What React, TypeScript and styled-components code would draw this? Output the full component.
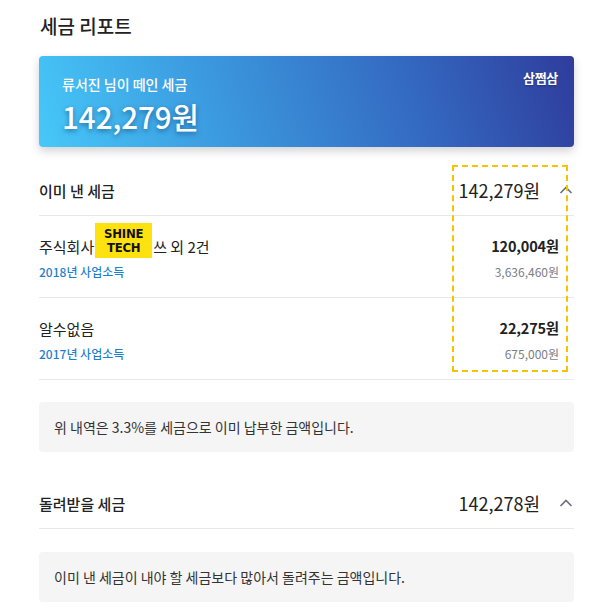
import * as React from "react"
import styled, { createGlobalStyle } from "styled-components"

const GlobalStyle = createGlobalStyle`
  html, body {
    margin: 0;
    padding: 0;
    background: #ffffff;
  }
  body {
    font-family: "Noto Sans CJK KR", "Noto Sans", sans-serif;
    color: #222222;
  }
`

const Page = styled.main`
  width: 535px;
  padding: 10px 0 14px 39px;
`

const Title = styled.h1`
  margin: 0 0 14px 1px;
  font-size: 19px;
  font-weight: 500;
  line-height: 32px;
  color: #222222;
`

const Card = styled.section`
  position: relative;
  height: 91px;
  box-sizing: border-box;
  padding: 18px 23px 0;
  border-radius: 4px;
  background: linear-gradient(72deg, #46c8f8 0%, #3b97de 35%, #3468c0 70%, #2f3c9c 100%);
  box-shadow: 0 4px 10px rgba(0, 0, 0, 0.18);
  color: #ffffff;
`

const CardLabel = styled.div`
  font-size: 14px;
  font-weight: 500;
  line-height: 20px;
`

const CardAmount = styled.div`
  margin-top: 6px;
  font-size: 29.5px;
  font-weight: 500;
  line-height: 32px;
  text-shadow: 0 2px 5px rgba(0, 40, 90, 0.5);
`

const Brand = styled.span`
  position: absolute;
  top: 12px;
  right: 16px;
  font-size: 13px;
  font-weight: 700;
  letter-spacing: -0.3px;
  text-shadow: 0 1px 2px rgba(0, 0, 0, 0.3);
`

const Section = styled.section<{ $top: number }>`
  position: relative;
  margin-top: ${p => p.$top}px;
`

const Header = styled.div`
  display: flex;
  align-items: center;
  height: 50px;
  border-bottom: 1px solid #e8e8e8;
`

const HeaderLabel = styled.div`
  flex: 1;
  font-size: 15px;
  font-weight: 500;
  color: #222222;
`

const HeaderAmount = styled.div`
  font-size: 18px;
  font-weight: 400;
  color: #222222;
`

const Chevron = styled.svg`
  width: 14px;
  height: 8px;
  margin-left: 19px;
  margin-right: 1px;
`

const Row = styled.div`
  display: flex;
  align-items: stretch;
  height: 82px;
  box-sizing: border-box;
  padding: 19px 15px 0 0;
  border-bottom: 1px solid #e8e8e8;
`

const Col = styled.div<{ $right?: boolean }>`
  display: flex;
  flex-direction: column;
  gap: 4px;
  flex: ${p => (p.$right ? "0 0 auto" : "1")};
  align-items: ${p => (p.$right ? "flex-end" : "flex-start")};
`

const Name = styled.div`
  display: flex;
  align-items: center;
  height: 22px;
  font-size: 15px;
  color: #222222;
`

const Badge = styled.span`
  align-self: flex-start;
  display: inline-flex;
  flex-direction: column;
  align-items: center;
  justify-content: center;
  width: 57px;
  height: 35px;
  margin: -12px 1px 0 1px;
  background: #fde210;
  color: #111111;
  font-family: "DejaVu Sans Condensed", "DejaVu Sans", sans-serif;
  font-stretch: condensed;
  font-size: 13px;
  font-weight: 700;
  line-height: 14px;
  letter-spacing: -0.2px;
`

const Sub = styled.div`
  font-size: 12px;
  font-weight: 500;
  line-height: 22px;
  color: #1f7fcf;
`

const Amount = styled.div`
  height: 22px;
  font-size: 14.5px;
  font-weight: 700;
  letter-spacing: -0.2px;
  color: #222222;
`

const Original = styled.div`
  font-size: 12px;
  line-height: 22px;
  color: #7d7d85;
`

const Highlight = styled.div`
  position: absolute;
  left: 413px;
  top: 0;
  width: 116px;
  height: 207px;
  box-sizing: border-box;
  border: 2px dashed #f5c400;
  pointer-events: none;
`

const Notice = styled.div<{ $top: number }>`
  margin-top: ${p => p.$top}px;
  height: 50px;
  box-sizing: border-box;
  display: flex;
  align-items: center;
  padding-left: 15px;
  border-radius: 4px;
  background: #f5f5f5;
  font-size: 14px;
  color: #333333;
`

const Up = () => (
  <Chevron viewBox="0 0 14 8">
    <path d="M1.5 7 L7 1.5 L12.5 7" fill="none" stroke="#6b6f78" strokeWidth="1.6" />
  </Chevron>
)

const payments = [
  { year: 2018, amount: "120,004원", original: "3,636,460원", badge: true },
  { year: 2017, amount: "22,275원", original: "675,000원", badge: false },
]

const App = () => (
  <>
    <GlobalStyle />
    <Page>
      <Title>세금 리포트</Title>
      <Card>
        <CardLabel>류서진 님이 떼인 세금</CardLabel>
        <CardAmount>142,279원</CardAmount>
        <Brand>삼쩜삼</Brand>
      </Card>

      <Section $top={18}>
        <Header>
          <HeaderLabel>이미 낸 세금</HeaderLabel>
          <HeaderAmount>142,279원</HeaderAmount>
          <Up />
        </Header>
        {payments.map(p => (
          <Row key={p.year}>
            <Col>
              <Name>
                {p.badge ? (
                  <>
                    주식회사
                    <Badge>
                      <span>SHINE</span>
                      <span>TECH</span>
                    </Badge>
                    쓰 외 2건
                  </>
                ) : (
                  "알수없음"
                )}
              </Name>
              <Sub>{p.year}년 사업소득</Sub>
            </Col>
            <Col $right>
              <Amount>{p.amount}</Amount>
              <Original>{p.original}</Original>
            </Col>
          </Row>
        ))}
        <Highlight />
      </Section>

      <Notice $top={22}>위 내역은 3.3%를 세금으로 이미 납부한 금액입니다.</Notice>

      <Section $top={26}>
        <Header>
          <HeaderLabel>돌려받을 세금</HeaderLabel>
          <HeaderAmount>142,278원</HeaderAmount>
          <Up />
        </Header>
      </Section>

      <Notice $top={23}>이미 낸 세금이 내야 할 세금보다 많아서 돌려주는 금액입니다.</Notice>
    </Page>
  </>
)

export default App
